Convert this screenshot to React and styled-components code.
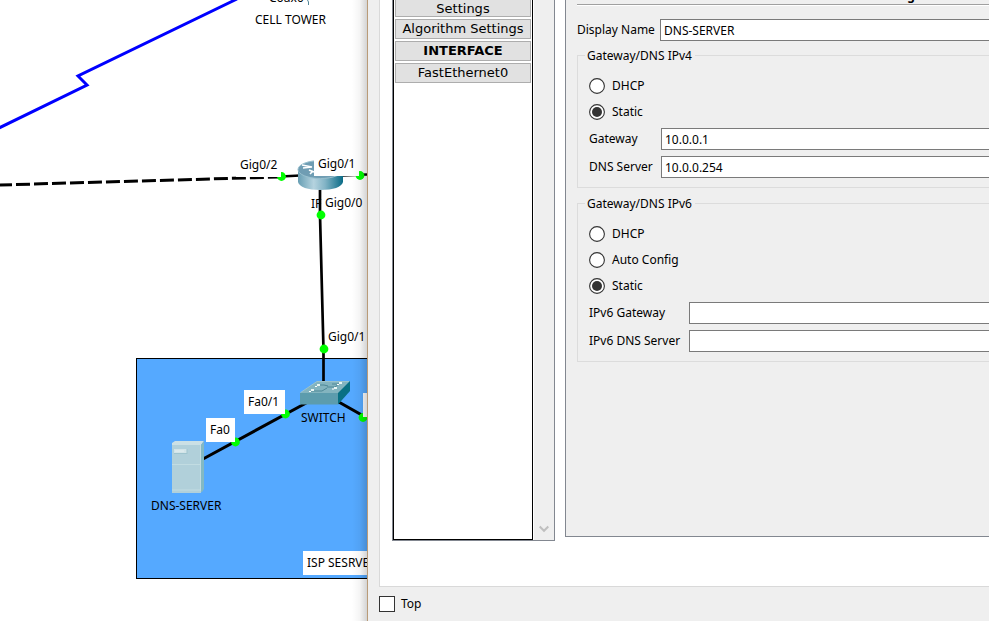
import React from 'react';
import styled, { createGlobalStyle } from 'styled-components';

const Global = createGlobalStyle`
  * { box-sizing: border-box; }
  html, body { margin: 0; overflow: hidden; background: #fff; }
  body { font: 12px/16px "Noto Sans", "DejaVu Sans", sans-serif; color: #000; }
`;
const Screen = styled.div`
  display: grid; grid-template-columns: 367px 622px;
  width: 989px; height: 621px; overflow: hidden;
`;
const Canvas = styled.section`
  position: relative; overflow: hidden; background: #fff;
`;
const Drawing = styled.svg`
  position: absolute; inset: 0; display: block;
`;
const NodeLabel = styled.div`
  position: absolute; white-space: pre; line-height: 16px;
  left: ${p => p.$x}px; top: ${p => p.$y}px;
  width: ${p => p.$w ? p.$w + 'px' : 'auto'};
  letter-spacing: ${p => p.$ls || 0}px;
`;
const PortLabel = styled(NodeLabel)`
  height: 24px; padding: 4px; background: #fff;
`;
const WindowShade = styled.div`
  position: absolute; right: 0; top: 0; width: 15px; height: 100%;
  background: linear-gradient(90deg, rgba(0,0,0,0), rgba(0,0,0,.04) 50%, rgba(0,0,0,.17));
`;
const Dialog = styled.section`
  display: flex; flex-direction: column; background: #efefef;
  border-left: 1px solid #b99b78; padding-left: 11px; min-width: 0;
`;
const TabPage = styled.div`
  display: flex; align-items: flex-start; height: 587px; flex: none;
  background: #fff; border: solid #d9d9d9; border-width: 0 0 1px 1px; padding-left: 12px;
`;
const ScrollArea = styled.div`
  display: flex; width: 163px; height: 541px; margin-right: 10px; flex: none;
  border: solid #828790; border-width: 0 1px 1px; background: #efefef;
`;
const Menu = styled.nav`
  width: 140px; height: 540px; background: #fff;
  border: 1px solid #000; border-top: 0; padding: 0 1px;
  display: flex; flex-direction: column; gap: 2px; overflow: hidden;
`;
const MenuButton = styled.button`
  flex: none; height: ${p => p.$cut ? 17 : 20}px; width: 136px; padding: 0; border: 1px solid #adadad;
  border-top-width: ${p => p.$cut ? 0 : 1}px;
  background: #e1e1e1; color: #000; white-space: nowrap;
  font: ${p => p.$bold ? 700 : 400} 13px/${p => p.$cut ? 15 : 18}px "DejaVu Sans", sans-serif;
  letter-spacing: ${p => p.$ls || 0}px;
`;
const ScrollTrack = styled.div`
  flex: 1; border-left: 1px solid #fff; display: flex; flex-direction: column;
  justify-content: flex-end; align-items: center; padding-bottom: 7px;
`;
const Settings = styled.main`
  flex: 1; height: 537px; background: #efefef; overflow: hidden;
  border: solid #828790; border-width: 0 0 1px 1px; padding-left: 11px;
`;
const Heading = styled.div`
  height: 18px; padding-left: 258px; border-bottom: 1px solid #fff; box-shadow: inset 0 -1px #a0a0a0;
  font-weight: 700; line-height: 16px;
`;
const HeadingText = styled.span`
  display: block; margin-top: -12px; white-space: nowrap; letter-spacing: -.35px;
`;
const FormRow = styled.div`
  display: grid; grid-template-columns: ${p => p.$label}px 1fr; align-items: center;
  height: 22px; margin-top: ${p => p.$top}px;
`;
const Caption = styled.label`
  white-space: nowrap; letter-spacing: ${p => p.$ls || 0}px;
`;
const Field = styled.input`
  height: 22px; min-width: 0; width: 100%; border: solid #7a7a7a; border-width: 1px 0 1px 1px;
  padding: 0 3px; background: #fff; color: #000; border-radius: 0;
  font: inherit; letter-spacing: ${p => p.$ls || 0}px;
`;
const Group = styled.fieldset`
  margin: ${p => p.$top}px 0 0; padding: 0 0 0 11px; min-width: 0; height: ${p => p.$h}px;
  border: solid #dcdcdc; border-width: 1px 0 1px 1px;
`;
const Legend = styled.div`
  width: 110px; height: 16px; margin: -8px 0 0 -4px; padding-left: 2px; background: #efefef;
  white-space: nowrap; letter-spacing: ${p => p.$ls || 0}px;
`;
const Choice = styled.label`
  display: flex; align-items: center; gap: 7px; height: 16px; margin-top: ${p => p.$first ? 14 : 10}px;
  letter-spacing: ${p => p.$ls || 0}px;
`;
const Footer = styled.footer`
  display: flex; align-items: center; gap: 6px; padding-top: 9px;
`;
const CheckBox = styled.span`
  width: 16px; height: 16px; border: 1px solid #333; background: #fff;
`;

function Radio({ on }) {
  return (
    <svg width="16" height="16" viewBox="0 0 16 16">
      <circle cx="8" cy="8" r="7.4" fill="#fff" stroke="#333" strokeWidth="1.1" />
      {on && <circle cx="8" cy="8" r="5" fill="#333" />}
    </svg>
  );
}

function Router() {
  return (
    <g>
      <defs>
        <linearGradient id="routerSide">
          <stop offset="0" stopColor="#679eb3" /><stop offset=".35" stopColor="#b5d3df" />
          <stop offset=".6" stopColor="#83b4c6" /><stop offset="1" stopColor="#096b86" />
        </linearGradient>
      </defs>
      <path d="M298 169V182C299 187 308 190 320.500 190S342 187 343 182V169Z" fill="url(#routerSide)" />
      <ellipse cx="320.500" cy="169.500" rx="22.500" ry="9" fill="#6f9db3" stroke="#99c0ce" />
      <path d="M302 165l10 2M303 168l9-1M313 171l-3 3M309 170l5 2" stroke="#fff" strokeWidth="1.600" fill="none" />
    </g>
  );
}

function Switch() {
  return (
    <g>
      <path d="M300 393L317 381H350L339 393Z" fill="#83b4bf" />
      <path d="M300 393H338V404.500H300Z" fill="#5c9cad" />
      <path d="M338 393L350 381V391L338 404.500Z" fill="#087083" />
      <path d="M300.500 392.500L317 381.500H349" fill="none" stroke="#a8c9cf" strokeWidth=".7" />
      <path d="M311 391h11l5-3M317 385h7l4 1M327 387h8l5-4M332 384h7" fill="none" stroke="#4e8897" strokeWidth="1" />
      <path d="M311 390h3M317 385h3M334 388h3M339 383h3" stroke="#e9f6f5" strokeWidth="2" />
      <path d="M309 391.500h2M315 386.500h2M332 389h2M337 384.500h2" stroke="#fff" strokeWidth="1" />
    </g>
  );
}

function Server() {
  return (
    <g>
      <path d="M172 443L175 441H204L201 445V493H172Z" fill="#cbe0e5" />
      <path d="M172 445H201V493H172Z" fill="#b1d0da" />
      <path d="M201 445L204 441V489L202 492H201Z" fill="#83b9c3" />
      <path d="M200.500 445V491M172 464.500H201M172 490H200" stroke="#c2dce2" fill="none" />
      <path d="M174 449H187V454H174Z" fill="#d2e4e8" />
      <path d="M174 453.500H187M187 449V454" stroke="#9fc4ce" />
      <path d="M175 451h9" stroke="#e4eff1" />
    </g>
  );
}

export default function App() {
  return (
    <>
      <Global />
      <Screen>
        <Canvas>
          <Drawing width="367" height="621" viewBox="0 0 367 621">
            <rect x="136.500" y="358.500" width="240" height="220" fill="#55a9ff" stroke="#000" />
            <path d="M237 -1L78 76L87 85L-1 128" fill="none" stroke="#00f" strokeWidth="3" />
            <path d="M307.500 0l1 2V5" fill="none" stroke="#538798" />
            <path d="M0 185L279 177" stroke="#000" strokeWidth="3" strokeDasharray="14 4" strokeDashoffset="2" />
            <path d="M281 176.500L300 175.500M342 175.500L367 174.500" stroke="#000" strokeWidth="2.500" />
            <path d="M320 190V215L323.500 350V382" fill="none" stroke="#000" strokeWidth="2.700" />
            <path d="M203 459L308 402M337 401L367 418" stroke="#000" strokeWidth="3" />
            <Router /><Switch /><Server />
            <g fill="#0f0">
              <circle cx="281.500" cy="176.500" r="4.400" /><circle cx="360" cy="175.500" r="4.400" />
              <circle cx="321" cy="215" r="4.400" /><circle cx="324" cy="349" r="4.400" />
              <circle cx="285.500" cy="414" r="4.400" /><circle cx="235.500" cy="442" r="4.400" />
              <circle cx="363" cy="417.500" r="4.400" />
            </g>
          </Drawing>
          <NodeLabel $x={269} $y={-10}>Coax0</NodeLabel>
          <NodeLabel $x={255} $y={12}>CELL TOWER</NodeLabel>
          <NodeLabel $x={311} $y={196}>IF</NodeLabel>
          <NodeLabel $x={301} $y={410}>SWITCH</NodeLabel>
          <NodeLabel $x={151} $y={498}>DNS-SERVER</NodeLabel>
          <PortLabel $x={236} $y={153}>Gig0/2</PortLabel>
          <PortLabel $x={314} $y={152}>Gig0/1</PortLabel>
          <NodeLabel $x={325} $y={195}>Gig0/0</NodeLabel>
          <NodeLabel $x={328} $y={329}>Gig0/1</NodeLabel>
          <PortLabel $x={244} $y={390} $w={41}>Fa0/1</PortLabel>
          <PortLabel $x={206} $y={418} $w={29}>Fa0</PortLabel>
          <PortLabel $x={363} $y={393} $w={5} />
          <PortLabel $x={303} $y={551}>ISP SESRVER</PortLabel>
          <WindowShade />
        </Canvas>
        <Dialog>
          <TabPage>
            <ScrollArea>
              <Menu>
                <MenuButton $cut>Settings</MenuButton>
                <MenuButton>Algorithm Settings</MenuButton>
                <MenuButton $bold>INTERFACE</MenuButton>
                <MenuButton>FastEthernet0</MenuButton>
              </Menu>
              <ScrollTrack>
                <svg width="10" height="8"><path d="M.7 1.500L5 5.800L9.300 1.500" fill="none" stroke="#bfbfbf" strokeWidth="2" /></svg>
              </ScrollTrack>
            </ScrollArea>
            <Settings>
              <Heading><HeadingText>Global Settings</HeadingText></Heading>
              <FormRow $label={83} $top={13}><Caption>Display Name</Caption><Field defaultValue="DNS-SERVER" /></FormRow>
              <Group $top={14} $h={133}>
                <Legend>Gateway/DNS IPv4</Legend>
                <Choice $first><Radio />DHCP</Choice>
                <Choice><Radio on />Static</Choice>
                <FormRow $label={72} $top={8}><Caption>Gateway</Caption><Field defaultValue="10.0.0.1" /></FormRow>
                <FormRow $label={72} $top={6}><Caption>DNS Server</Caption><Field defaultValue="10.0.0.254" /></FormRow>
              </Group>
              <Group $top={15} $h={159}>
                <Legend>Gateway/DNS IPv6</Legend>
                <Choice $first><Radio />DHCP</Choice>
                <Choice><Radio />Auto Config</Choice>
                <Choice><Radio on />Static</Choice>
                <FormRow $label={100} $top={8}><Caption>IPv6 Gateway</Caption><Field /></FormRow>
                <FormRow $label={100} $top={6}><Caption>IPv6 DNS Server</Caption><Field /></FormRow>
              </Group>
            </Settings>
          </TabPage>
          <Footer><CheckBox />Top</Footer>
        </Dialog>
      </Screen>
    </>
  );
}
